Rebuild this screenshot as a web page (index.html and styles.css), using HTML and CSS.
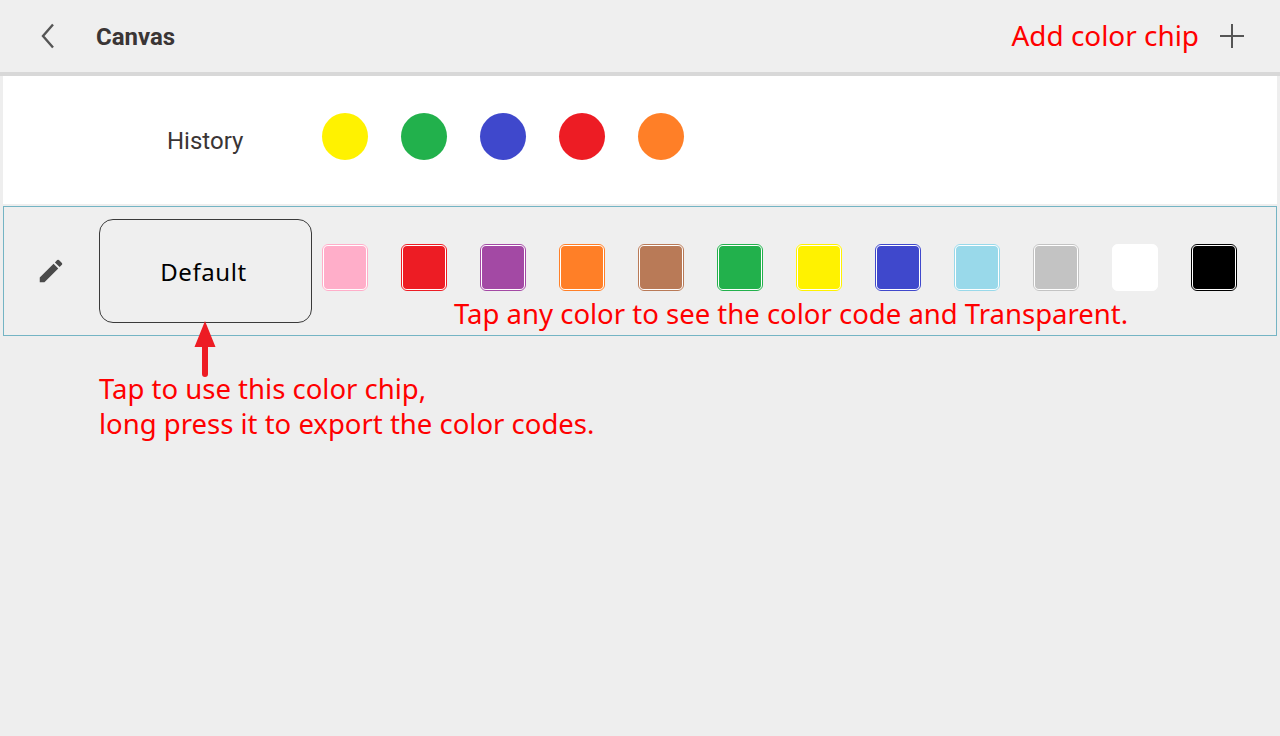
FILE: index.html
```html
<!DOCTYPE html>
<html lang="en">
<head>
    <meta charset="UTF-8">
    <title>Canvas</title>
    <link rel="stylesheet" href="styles.css">
</head>
<body>
    <header class="top-bar">
        <svg class="back-icon" width="16" height="26" viewBox="0 0 16 26">
            <path d="M13 1.500 3 13l10 11.500" fill="none" stroke="#555" stroke-width="2.400"/>
        </svg>
        <h1>Canvas</h1>
        <span class="note add-note">Add color chip</span>
        <svg class="plus-icon" width="24" height="24" viewBox="0 0 24 24">
            <path d="M12 0v24M0 12h24" fill="none" stroke="#555" stroke-width="2"/>
        </svg>
    </header>

    <section class="history">
        <span class="history-label">History</span>
        <div class="dots">
            <span class="dot yellow"></span>
            <span class="dot green"></span>
            <span class="dot blue"></span>
            <span class="dot red"></span>
            <span class="dot orange"></span>
        </div>
    </section>

    <section class="chip-row">
        <svg class="edit-icon" width="30" height="30" viewBox="0 0 24 24">
            <path d="M3 17.250V21h3.750L17.810 9.940l-3.750-3.750L3 17.250zM20.710 7.040a1 1 0 0 0 0-1.410l-2.340-2.340a1 1 0 0 0-1.410 0l-1.830 1.830 3.750 3.750 1.830-1.830z" fill="#4a4a4a"/>
        </svg>
        <div class="default-chip">Default</div>
        <div class="swatches">
            <span class="swatch pink"></span>
            <span class="swatch red"></span>
            <span class="swatch purple"></span>
            <span class="swatch orange"></span>
            <span class="swatch brown"></span>
            <span class="swatch green"></span>
            <span class="swatch yellow"></span>
            <span class="swatch blue"></span>
            <span class="swatch sky"></span>
            <span class="swatch grey"></span>
            <span class="swatch white"></span>
            <span class="swatch black"></span>
        </div>
        <span class="note tap-note">Tap any color to see the color code and Transparent.</span>
        <svg class="arrow" width="22" height="58" viewBox="0 0 22 58">
            <path d="M11 0 21.500 26H14V53a3 3 0 0 1-6 0V26H.5z" fill="#ed1c24"/>
        </svg>
    </section>

    <p class="note use-note">Tap to use this color chip,<br>long press it to export the color codes.</p>
</body>
</html>
```
FILE: styles.css
```css
* {
    margin: 0;
    padding: 0;
    box-sizing: border-box;
}

body {
    width: 1280px;
    height: 736px;
    overflow: hidden;
    background: #eeeeee;
    font-family: 'Roboto', sans-serif;
    color: #3a3535;
}

.note {
    font-family: 'Noto Sans', sans-serif;
    font-size: 27.500px;
    color: #ff0000;
}

.top-bar {
    height: 76px;
    display: flex;
    align-items: center;
    background: #efefef;
    border-bottom: 4px solid #d8d8d8;
    padding: 0 36px 0 40px;
}

.top-bar h1 {
    font-size: 24px;
    font-weight: 700;
    margin-left: 40px;
    padding-top: 2px;
}

.add-note {
    font-size: 27.900px;
    margin-left: auto;
    margin-right: 21px;
    padding-bottom: 2px;
}

.history {
    height: 128px;
    margin: 0 3px 2px;
    display: flex;
    align-items: center;
    background: white;
}

.history-label {
    font-size: 24px;
    width: 319px;
    padding-left: 164px;
    padding-top: 2px;
}

.dots {
    display: flex;
    gap: 33px;
    margin-top: -8px;
}

.dot {
    width: 46px;
    height: 47px;
    border-radius: 50%;
}

.chip-row {
    position: relative;
    height: 130px;
    margin: 0 3px;
    display: flex;
    align-items: center;
    border: 1px solid #74b4c4;
    background: #efefef;
}

.edit-icon {
    margin-left: 32px;
}

.default-chip {
    width: 213px;
    height: 104px;
    margin-left: 33px;
    padding-right: 4px;
    display: flex;
    align-items: center;
    justify-content: center;
    border: 1px solid #3a3a3a;
    border-radius: 14px;
    font-family: 'Noto Sans', sans-serif;
    font-size: 24px;
    letter-spacing: 0.6px;
    color: #000;
}

.swatches {
    display: flex;
    gap: 33px;
    margin-left: 10px;
    margin-top: -8px;
}

.swatch {
    width: 46px;
    height: 47px;
    border-radius: 6px;
    border: 2px solid white;
    outline: 1px solid currentColor;
    outline-offset: -1px;
}

.yellow { background: #fff200; color: #fff200; }
.green { background: #22b14c; color: #22b14c; }
.blue { background: #3f48cc; color: #3f48cc; }
.red { background: #ed1c24; color: #ed1c24; }
.orange { background: #ff7f27; color: #ff7f27; }
.pink { background: #ffaec9; color: #ffaec9; }
.purple { background: #a349a4; color: #a349a4; }
.brown { background: #b97a57; color: #b97a57; }
.sky { background: #99d9ea; color: #99d9ea; }
.grey { background: #c3c3c3; color: #c3c3c3; }
.white { background: #ffffff; color: #ffffff; }
.black { background: #000000; color: #000000; }

.tap-note {
    position: absolute;
    left: 450px;
    top: 88px;
    line-height: 38px;
    white-space: nowrap;
}

.arrow {
    position: absolute;
    left: 190px;
    top: 114px;
}

.use-note {
    margin: 35px 0 0 99px;
    line-height: 35px;
}
```
